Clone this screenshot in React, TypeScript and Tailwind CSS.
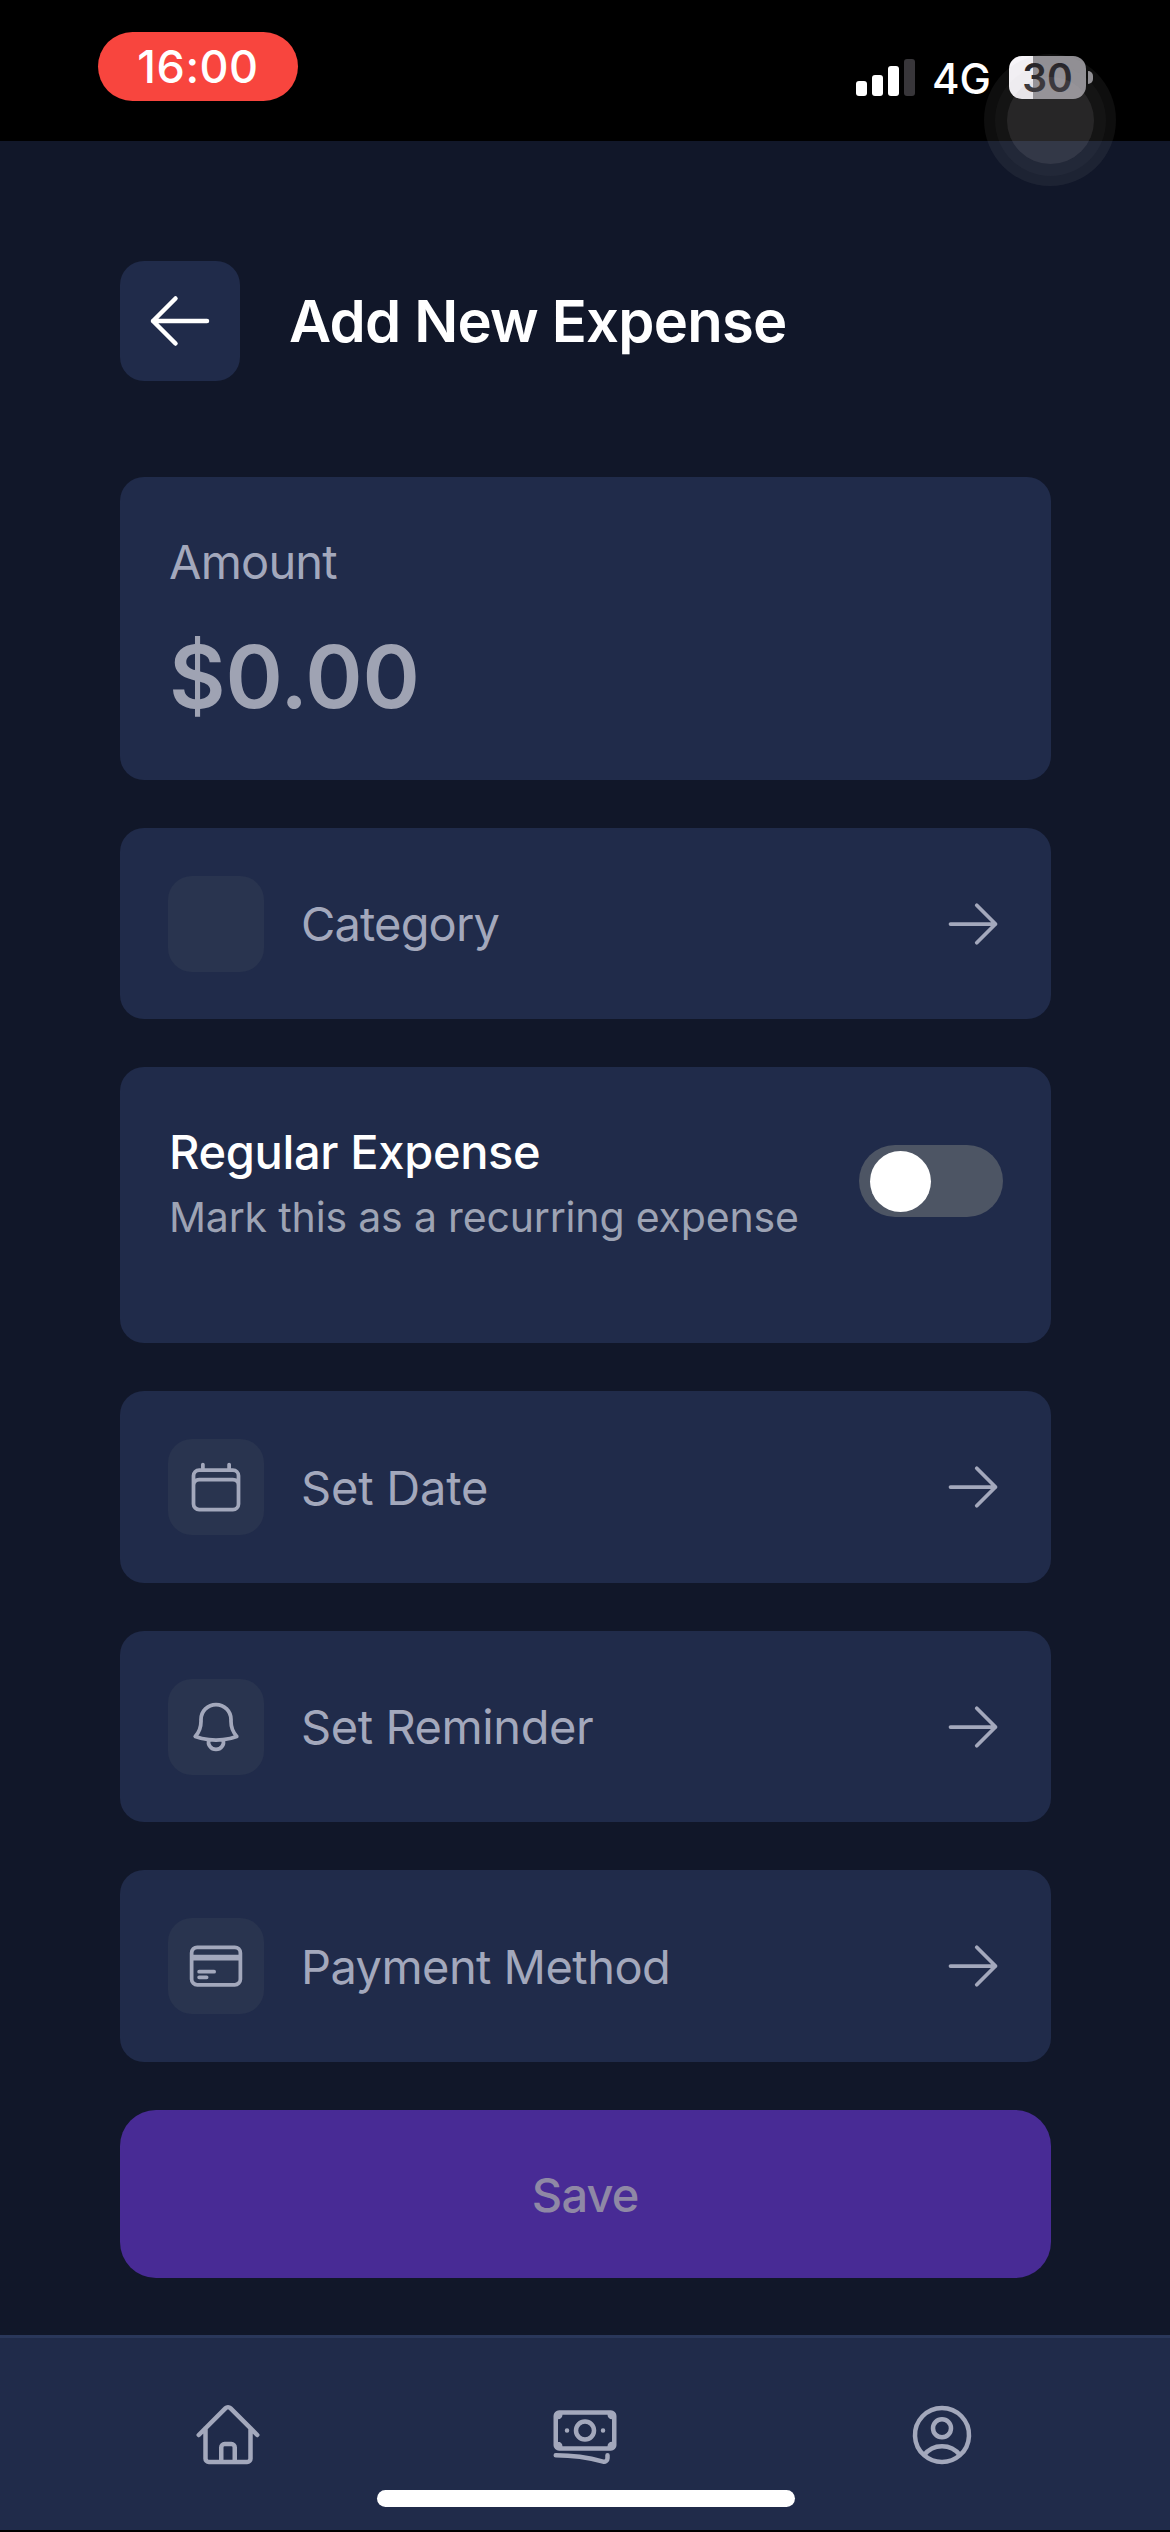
import type { ReactNode } from "react";
import {
  HiOutlineArrowLeft,
  HiOutlineArrowRight,
  HiOutlineBanknotes,
  HiOutlineBell,
  HiOutlineCalendar,
  HiOutlineCreditCard,
  HiOutlineHome,
  HiOutlineUserCircle,
} from "react-icons/hi2";

type RowProps = {
  label: string;
  icon?: ReactNode;
  size: string;
  tracking: string;
};

function Row({ label, icon, size, tracking }: RowProps) {
  return (
    <button className={`flex w-full items-center rounded-[24px] bg-[#202b4a] px-12 text-[#a3a8bc] ${size}`}>
      <span className="flex size-24 items-center justify-center rounded-[24px] bg-[#29344f]">{icon}</span>
      <span className={`ml-[37px] pt-px text-[47px] leading-[56px] ${tracking}`}>{label}</span>
      <HiOutlineArrowRight className="ml-auto size-[60px]" />
    </button>
  );
}

function StatusBar() {
  return (
    <header className="relative flex h-[141px] justify-between bg-black pl-[98px] pr-[77px] text-white">
      <div className="mt-8 flex h-[69px] w-[200px] items-center justify-center rounded-full bg-[#f8453e] pt-px text-[45px] font-medium tracking-[0.5px]">
        16:00
      </div>
      <div className="mt-[56px] flex h-[43px] items-start">
        <div className="mt-[3px] flex h-[37px] items-end gap-[5px]">
          <i className="h-[15px] w-[11px] rounded-[3px] bg-white" />
          <i className="h-[21px] w-[11px] rounded-[3px] bg-white" />
          <i className="h-[30px] w-[11px] rounded-[3px] bg-white" />
          <i className="h-[37px] w-[11px] rounded-[3px] bg-[#38363a]" />
        </div>
        <span className="ml-[17px] w-[77px] text-[42px] leading-[46px] font-medium">4G</span>
        <div className="flex h-[43px] w-[77px] items-center justify-center rounded-[13px] bg-linear-to-r from-[#f7f5f9] from-[31%] to-[#8f8d92] to-[31%] text-[39px] leading-[43px] font-semibold text-[#1c1a1e]">
          30
        </div>
        <i className="mt-[15px] ml-[2px] h-[13px] w-[5px] rounded-r-full bg-[#8f8d92]" />
      </div>
      <div className="absolute top-[54px] left-[984px] flex size-[132px] items-center justify-center rounded-full bg-[#b4b0b8]/8">
        <div className="flex size-[111px] items-center justify-center rounded-full bg-[#b4b0b8]/4">
          <div className="size-[87px] rounded-full bg-[#b4b0b8]/12" />
        </div>
      </div>
    </header>
  );
}

function AmountCard() {
  return (
    <section className="h-[303px] rounded-[24px] bg-[#202b4a] pt-[57px] pr-12 pl-[49px]">
      <p className="text-[47px] leading-[56px] tracking-[-0.8px] text-[#a3a8bc]">Amount</p>
      <p className="mt-[35px] text-[87px] leading-[104px] font-semibold tracking-[-0.2px] text-[#9fa3b3]">$0.00</p>
    </section>
  );
}

function RegularCard() {
  return (
    <section className="flex h-[276px] justify-between rounded-[24px] bg-[#202b4a] pr-12 pl-[49px]">
      <div className="pt-[57px]">
        <h2 className="text-[47px] leading-[56px] font-medium tracking-[-0.34px] text-white">Regular Expense</h2>
        <p className="mt-3 text-[41px] leading-[50px] tracking-[-0.17px] text-[#9da3b4]">
          Mark this as a recurring expense
        </p>
      </div>
      <button className="mt-[78px] flex h-[72px] w-36 items-center rounded-full bg-[#4d5564] pl-[11px]">
        <span className="size-[61px] rounded-full bg-white" />
      </button>
    </section>
  );
}

export default function App() {
  return (
    <div className="flex h-[2532px] w-[1170px] flex-col overflow-hidden bg-[#111729] font-['Inter',sans-serif]">
      <StatusBar />
      <main className="flex-1 pt-[120px] pr-[119.5px] pl-[120px]">
        <div className="flex items-center">
          <button className="flex size-[120px] items-center justify-center rounded-[24px] bg-[#202b4a] text-white">
            <HiOutlineArrowLeft className="size-[72px]" />
          </button>
          <h1 className="ml-[49px] text-[58px] leading-[72px] font-semibold tracking-[-0.79px] text-white">
            Add New Expense
          </h1>
        </div>
        <div className="mt-24 flex flex-col gap-12">
          <AmountCard />
          <Row label="Category" size="h-[191px]" tracking="tracking-[-0.85px]" />
          <RegularCard />
          <Row
            label="Set Date"
            size="h-[192px]"
            tracking="tracking-[-0.2px]"
            icon={<HiOutlineCalendar className="size-[60px]" />}
          />
          <Row
            label="Set Reminder"
            size="h-[191px]"
            tracking="tracking-[-0.42px]"
            icon={<HiOutlineBell className="size-[60px]" />}
          />
          <Row
            label="Payment Method"
            size="h-[192px]"
            tracking="tracking-[-0.56px]"
            icon={<HiOutlineCreditCard className="size-[60px]" />}
          />
          <button className="h-[168px] rounded-[36px] bg-[#482b95] pt-[2px] text-[47px] font-medium tracking-[-0.8px] text-[#8f88a5]">
            Save
          </button>
        </div>
      </main>
      <nav className="relative flex h-[195px] justify-around border-t-[3px] border-[#2a375a] bg-[#202b4a] px-[50px] pt-[61px] text-[#a3a8bc]">
        <HiOutlineHome className="size-[72px]" />
        <HiOutlineBanknotes className="size-[72px]" />
        <HiOutlineUserCircle className="size-[72px]" />
        <span className="absolute bottom-[23px] left-[377px] h-[17px] w-[418px] rounded-full bg-white" />
      </nav>
      <div className="h-[2px] bg-black" />
    </div>
  );
}
